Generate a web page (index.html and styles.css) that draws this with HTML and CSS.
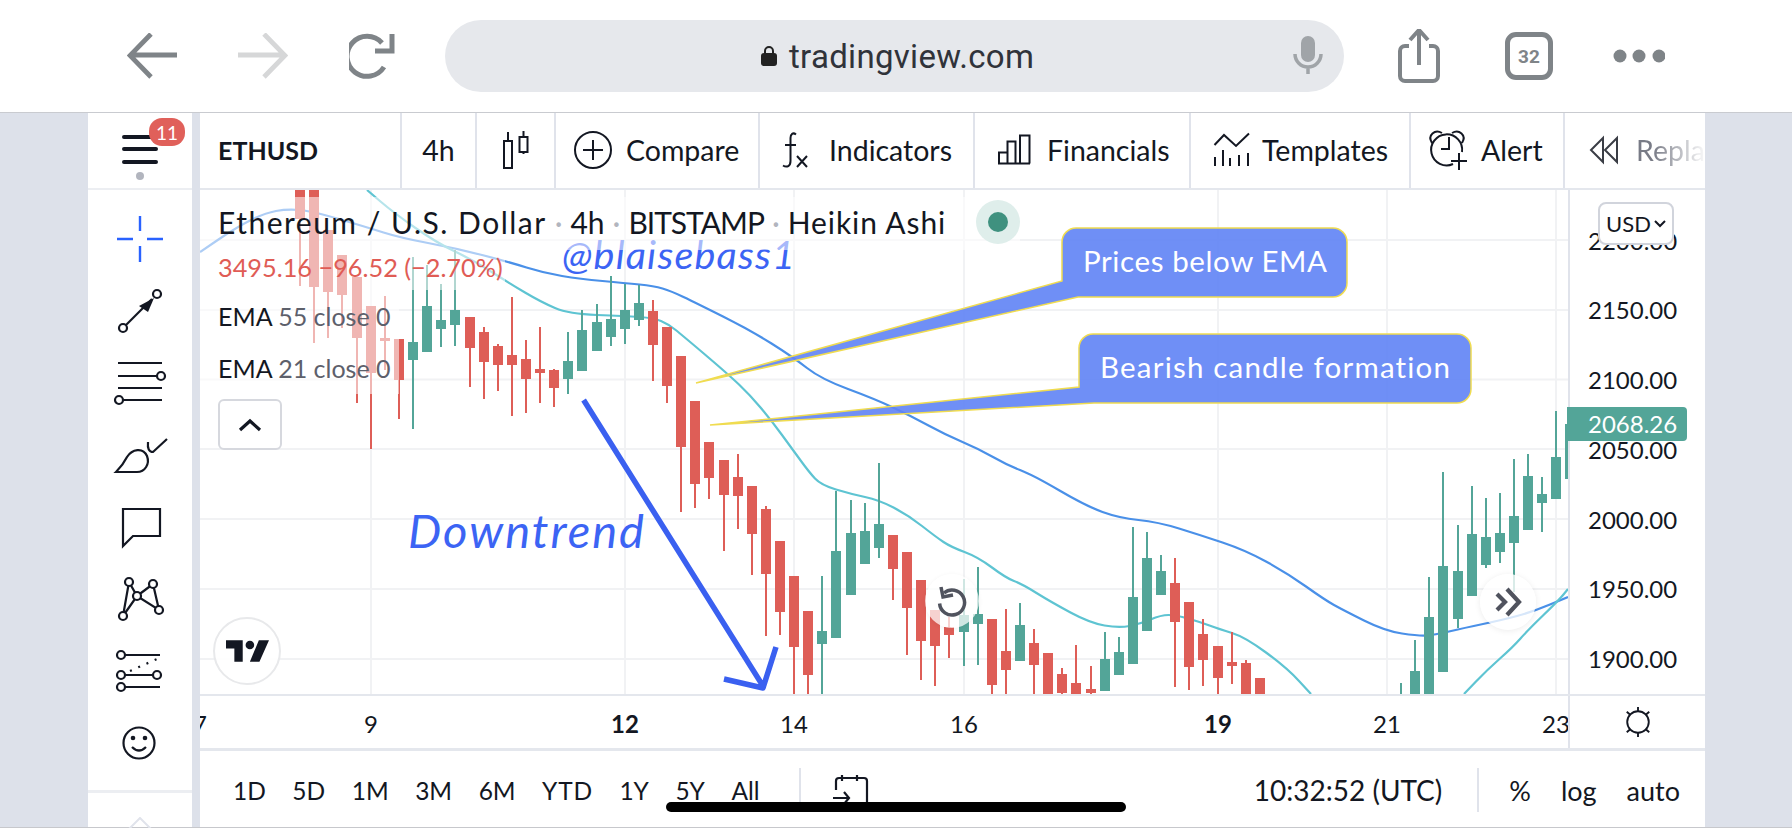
FILE: index.html
```html
<!DOCTYPE html>
<html lang="en">
<head>
<meta charset="utf-8">
<title>ETHUSD – TradingView</title>
<link rel="stylesheet" href="styles.css">
</head>
<body>
<header class="browser">
  <svg class="b-icon b-nav" viewBox="0 0 50 46"><path d="M50 22H6M24 1L3 22.500L24 44" fill="none" stroke="#7f8488" stroke-width="4.800"/></svg>
  <svg class="b-icon b-nav" viewBox="0 0 50 46"><path d="M0 22H44M26 1L47 22.500L26 44" fill="none" stroke="#d6d7d8" stroke-width="4.800"/></svg>
  <svg class="b-icon b-reload" viewBox="0 0 46 46"><path d="M33 10A20 20 0 1 0 35 34" fill="none" stroke="#7f8488" stroke-width="5"/><path d="M26 18H43V1" fill="none" stroke="#7f8488" stroke-width="5"/></svg>
  <div class="address">
    <svg class="lock" viewBox="0 0 16 20"><path d="M4 8V5a4 4 0 0 1 8 0v3" fill="none" stroke="#222" stroke-width="2"/><rect y="7" width="16" height="13" rx="3" fill="#222"/></svg>
    <span class="url">tradingview.com</span>
    <svg class="mic" viewBox="0 0 30 38"><rect x="8" width="14" height="26" rx="7" fill="#a0a4a8"/><path d="M2 18a13 13 0 0 0 26 0M15 31V38" fill="none" stroke="#a0a4a8" stroke-width="3.500"/></svg>
  </div>
  <svg class="b-icon b-share" viewBox="0 0 42 54"><path d="M11 17H7a5 5 0 0 0-5 5v25a5 5 0 0 0 5 5h28a5 5 0 0 0 5-5V22a5 5 0 0 0-5-5h-4" fill="none" stroke="#7f8488" stroke-width="4"/><path d="M21 3V36M12 11L21 1L30 11" fill="none" stroke="#7f8488" stroke-width="4"/></svg>
  <div class="tabs">32</div>
  <svg class="b-icon b-more" viewBox="0 0 52 14"><circle cx="7" cy="7" r="6.500" fill="#7f8488"/><circle cx="26" cy="7" r="6.500" fill="#7f8488"/><circle cx="46" cy="7" r="6.500" fill="#7f8488"/></svg>
</header>

<div class="page">
  <div class="app">
    <aside class="sidebar">
      <div class="menu-cell">
        <svg class="menu-icon" viewBox="0 0 36 56"><path d="M2 14H34M2 26H34M2 39H34" stroke="#131722" stroke-width="4" stroke-linecap="round"/><circle cx="18" cy="53" r="4" fill="#b2b5be"/></svg>
        <span class="badge">11</span>
      </div>
      <div class="tools">
        <svg class="tool" viewBox="0 0 52 52"><path d="M3 26H19M33 26H49M26 3V18M26 33V49" fill="none" stroke="#2962ff" stroke-width="2.400"/></svg>
        <svg class="tool" viewBox="0 0 52 52"><path d="M12 40L38 14" class="ts"/><path d="M25 21L40 13L34 27Z" fill="#131722"/><circle cx="43" cy="9" r="4" class="tc"/><circle cx="9" cy="43" r="4" class="tc"/></svg>
        <svg class="tool" viewBox="0 0 52 52"><path d="M4 6H48M4 19H43M4 31H48M9 43H48" class="ts"/><circle cx="47" cy="19" r="4" class="tc"/><circle cx="5" cy="43" r="4" class="tc"/></svg>
        <svg class="tool" viewBox="0 0 52 52"><path d="M2 43H23C31 43 36 35 33 27C29 18 18 20 13 28C10 34 7 38 2 43Z" class="ts"/><path d="M34 13Q33 23 39 23L53 10" class="ts"/></svg>
        <svg class="tool" viewBox="0 0 52 52"><path d="M9 8H46V35H19L9 45Z" class="ts"/></svg>
        <svg class="tool" viewBox="0 0 52 52"><path d="M9 43L15 9L23 23L39 11L45 37L23 23L9 43" class="ts"/><circle cx="15" cy="9" r="4" class="tc"/><circle cx="39" cy="11" r="4" class="tc"/><circle cx="23" cy="23" r="4" class="tc"/><circle cx="45" cy="37" r="4" class="tc"/><circle cx="9" cy="43" r="4" class="tc"/></svg>
        <svg class="tool" viewBox="0 0 52 52"><path d="M11 10H46M11 30H39M11 42H46" class="ts"/><path d="M16 26L43 14" class="ts" stroke-dasharray="2 7"/><circle cx="7" cy="10" r="4" class="tc"/><circle cx="7" cy="30" r="4" class="tc"/><circle cx="43" cy="30" r="4" class="tc"/><circle cx="7" cy="42" r="4" class="tc"/></svg>
        <svg class="tool" viewBox="0 0 52 52"><circle cx="25" cy="26" r="15.500" class="ts"/><circle cx="19" cy="21" r="2.300" fill="#131722"/><circle cx="31" cy="21" r="2.300" fill="#131722"/><path d="M18 30Q25 37 32 30" class="ts"/></svg>
      </div>
      <div class="side-foot"><svg class="side-chevron" viewBox="0 0 24 12"><path d="M1 12L12 1L23 12" fill="none" stroke="#e0e3eb" stroke-width="2"/></svg></div>
    </aside>

    <main class="workspace">
      <nav class="toolbar">
        <div class="tb tb-symbol">ETHUSD</div>
        <div class="tb tb-interval">4h</div>
        <div class="tb tb-style"><svg class="tb-svg i-candle" viewBox="0 0 26 38"><path d="M5 1V10M5 36V38" fill="none" stroke="#131722" stroke-width="2"/><rect x="1" y="10" width="8" height="27" class="tb-s"/><path d="M20.500 0V6M20.500 21V23" fill="none" stroke="#131722" stroke-width="2"/><rect x="16.500" y="6" width="8" height="15" class="tb-s"/></svg></div>
        <div class="tb tb-compare"><svg class="tb-svg i-compare" viewBox="0 0 38 38"><circle cx="19" cy="19" r="18" class="tb-s"/><path d="M19 9V29M9 19H29" class="tb-s"/></svg><span>Compare</span></div>
        <div class="tb tb-indicators"><svg class="tb-svg i-fx" viewBox="0 0 28 36"><path d="M14 2.500C11 0 8.500 2 8.500 6V29C8.500 34 5 36 1 33.500M3 13H14M15 24L25 35M25 24L15 35" class="tb-s"/></svg><span>Indicators</span></div>
        <div class="tb tb-financials"><svg class="tb-svg i-fin" viewBox="0 0 34 31"><path d="M1 29.500H33M2 29.500V18.500H10.500V29.500M10.500 29.500V7.500H18.500V29.500M23 29.500V1.500H32.500V29.500" class="tb-s"/></svg><span>Financials</span></div>
        <div class="tb tb-templates"><svg class="tb-svg i-tpl" viewBox="0 0 36 34"><path d="M0.500 12L10 2L22 13L35 0.500" class="tb-s"/><path d="M1 24V33M9 17V33M16 25V33M25 22V33M34 20V33" class="tb-s"/></svg><span>Templates</span></div>
        <div class="tb tb-alert"><svg class="tb-svg i-alert" viewBox="0 0 40 40"><path d="M24 34A15.500 15.500 0 1 1 33 22M3 13C-2 5 6 -1 13 3M33 13C38 5 30 -1 23 3M20 7V19H12M30 23V40M22 31H38" class="tb-s"/></svg><span>Alert</span></div>
        <div class="tb tb-replay"><svg class="tb-svg i-replay" viewBox="0 0 30 26"><path d="M14 1L2 13L14 25ZM28 1L16 13L28 25Z" class="tb-r"/></svg><span class="replay-label">Replay</span></div>
      </nav>

      <section class="chart-row">
        <div class="pane">
          <svg class="chart" viewBox="200 190 1368 504" preserveAspectRatio="none">
            <path class="grid" d="M200 240H1568M200 310H1568M200 379.500H1568M200 449H1568M200 519H1568M200 589H1568M200 659H1568M371 190V694M625 190V694M794 190V694M964 190V694M1218 190V694M1387 190V694M1556 190V694"/>
            <path class="ema-slow" d="M200 252L218.500 239.500Q237 227 251 220Q265 213 276 211Q287 209 299.500 210Q312 211 339 219Q366 227 383.500 232.500Q401 238 428 243Q455 248 482 255Q509 262 526.500 267.500Q544 273 562 276Q580 279 602.500 281Q625 283 639.500 284.500Q654 286 662.500 288.500Q671 291 683.500 297Q696 303 723 316.500Q750 330 771.500 343.500Q793 357 807 368Q821 379 848 389Q875 399 893 407.500Q911 416 928.500 425.500Q946 435 962.500 442Q979 449 993 457Q1007 465 1020 470Q1033 475 1059.500 490.500Q1086 506 1102.500 512Q1119 518 1138.500 520Q1158 522 1179 528.500Q1200 535 1222.500 542.500Q1245 550 1266 561.500Q1287 573 1306 586.500Q1325 600 1334 605Q1343 610 1364 620.500Q1385 631 1402 633.500Q1419 636 1426.500 635.500Q1434 635 1449 631.500Q1464 628 1483 624Q1502 620 1517 616Q1532 612 1550 604.500L1568 597"/>
            <path class="ema-fast" d="M367 190L380.500 201.500Q394 213 415.500 228Q437 243 455 251.500Q473 260 491 271.500Q509 283 525 292.500Q541 302 555 308Q569 314 597 315Q625 316 639.500 317Q654 318 661 321Q668 324 675 329.500Q682 335 705.500 355Q729 375 739.500 385Q750 395 760.500 407.500Q771 420 782 435Q793 450 801 461Q809 472 815 478.500Q821 485 836 489.500Q851 494 865 497Q879 500 893.500 507.500Q908 515 922 526Q936 537 943.500 542Q951 547 964.500 552Q978 557 992 567.500Q1006 578 1014 581Q1022 584 1036.500 593Q1051 602 1070.500 612.500Q1090 623 1104.500 625.500Q1119 628 1129.500 626Q1140 624 1150.500 619.500Q1161 615 1168.500 615Q1176 615 1188 618.500Q1200 622 1209.500 625.500Q1219 629 1232 633Q1245 637 1266 652.500Q1287 668 1299 681L1311 694"/>
            <path class="ema-fast" d="M1464 694L1475.500 682Q1487 670 1500 658.500Q1513 647 1520.500 638.500Q1528 630 1543.500 615Q1559 600 1563.500 594.500L1568 589"/>
            <path class="wick down" d="M300 190V286M314 190V343M328 230V338M342 255V328M357 277V403M371 306V449M385 296V370M399 339V419M470 317V387M484 327V399M498 344V391M512 297V416M526 340V413M540 327V403M554 369V407M653 300V381M667 327V403M681 356V512M695 401V508M709 442V499M724 460V551M738 454V529M752 486V575M766 506V636M780 541V635M794 576V694M808 611V694M893 535V600M907 552V655M921 580V680M935 610V686M949 617V658M992 619V694M1006 609V694M1034 629V694M1062 668V694M1076 645V694M1091 666V694M1175 558V687M1189 602V690M1203 619V686M1218 646V694M1232 632V684M1246 660V694"/>
            <path class="body down" d="M300 190V219M314 190V287M328 230V292M342 255V295M357 277V338M371 306V373M385 338V341M399 339V380M470 317V348M484 332V362M498 346V365M512 355V365M526 359V379M540 369V373M554 370V388M653 311V345M667 327V386M681 356V447M695 401V484M709 442V478M724 460V495M738 477V496M752 486V534M766 509V574M780 541V612M794 576V647M808 611V675M893 535V569M907 552V608M921 580V641M935 610V646M949 627V635M992 619V685M1006 651V670M1034 643V665M1048 653V694M1062 674V693M1076 683V694M1091 689V693M1175 583V622M1189 602V667M1203 634V660M1218 646V678M1232 662V666M1246 663V694M1260 678V694"/>
            <path class="wick up" d="M413 257V429M427 265V352M441 284V347M455 250V346M568 332V394M582 310V371M597 304V351M611 276V346M625 284V344M639 285V326M822 576V694M836 491V638M851 500V595M865 503V564M879 463V558M964 579V666M978 567V665M1020 603V661M1105 632V691M1119 637V675M1133 527V664M1147 532V631M1161 555V595M1401 683V694M1415 640V694M1429 577V694M1443 472V672M1458 525V628M1472 486V596M1486 498V568M1500 493V563M1514 459V592M1528 454V530M1542 477V532M1556 411V499"/>
            <path class="body up" d="M413 342V360M427 306V352M441 320V329M455 310V325M568 361V379M582 330V371M597 322V351M611 319V337M625 310V329M639 303V320M822 631V644M836 551V638M851 533V595M865 531V564M879 524V548M964 615V632M978 614V624M1020 625V661M1105 659V691M1119 652V675M1133 597V664M1147 558V631M1161 571V595M1415 671V694M1429 617V694M1443 566V672M1458 571V619M1472 534V596M1486 537V565M1500 533V552M1514 516V543M1528 476V530M1542 494V503M1556 457V499M1570 424V479"/>
            <text class="draw-sign" x="562" y="269">@blaisebass1</text>
            <text class="draw-trend" x="408" y="548">Downtrend</text>
            <path class="draw-arrow" d="M583.600 400L763 686M724 679L763 688L776 647"/>
            <path class="callout" d="M1076 228H1333a14 14 0 0 1 14 14V283a14 14 0 0 1-14 14H1078L696 383L1062 281V242a14 14 0 0 1 14-14Z"/>
            <path class="callout" d="M1093 334H1457a14 14 0 0 1 14 14V389a14 14 0 0 1-14 14H1094L710 425L1079 387V348a14 14 0 0 1 14-14Z"/>
            <text class="callout-text" x="1083" y="272">Prices below EMA</text>
            <text class="callout-text wide" x="1100" y="378">Bearish candle formation</text>
          </svg>

          <div class="legend">
            <div class="leg-row leg-title"><span class="t-name">Ethereum / U.S. Dollar</span><i class="sep">·</i><span>4h</span><i class="sep">·</i><span class="t-exch">BITSTAMP</span><i class="sep">·</i><span class="t-style">Heikin Ashi</span><span class="status"></span></div>
            <div class="leg-row leg-price">3495.16 −96.52 (−2.70%)</div>
            <div class="leg-row leg-ema"><b>EMA</b> 55 close 0</div>
            <div class="leg-row leg-ema"><b>EMA</b> 21 close 0</div>
            <div class="collapse"><svg class="collapse-icon" viewBox="0 0 24 14"><path d="M2 12L12 3L22 12" fill="none" stroke="#131722" stroke-width="3.200"/></svg></div>
          </div>

          <div class="round logo-btn"><svg class="tv-logo" viewBox="0 0 36 18"><path d="M14 18H7V7H0V0H14ZM28 18H20L27.500 0H36Z" fill="#131722"/><circle cx="20" cy="4" r="3.600" fill="#131722"/></svg></div>
          <div class="round reset-btn"><svg class="round-icon" viewBox="0 0 32 32"><path d="M8 8A12.500 12.500 0 1 1 3.600 18.500" fill="none" stroke="#50535e" stroke-width="3.500"/><path d="M5 2L7 12L17 10" fill="none" stroke="#50535e" stroke-width="3.500"/></svg></div>
          <div class="round fwd-btn"><svg class="round-icon" viewBox="0 0 32 32"><path d="M5 8L13 16L5 24M15 3L27 16L15 29" fill="none" stroke="#50535e" stroke-width="4.200"/></svg></div>
        </div>

        <div class="price-axis">
          <span class="price">2200.00</span>
          <span class="price">2150.00</span>
          <span class="price">2100.00</span>
          <span class="price">2050.00</span>
          <span class="price">2000.00</span>
          <span class="price">1950.00</span>
          <span class="price">1900.00</span>
          <div class="currency">USD<svg class="cur-chevron" viewBox="0 0 12 8"><path d="M1 1L6 6L11 1" fill="none" stroke="#131722" stroke-width="2"/></svg></div>
          <div class="last-price">2068.26</div>
        </div>
      </section>

      <div class="time-row">
        <div class="time-axis">
          <span class="tick" style="left:0px">7</span>
          <span class="tick" style="left:171px">9</span>
          <span class="tick bold" style="left:425px">12</span>
          <span class="tick" style="left:594px">14</span>
          <span class="tick" style="left:764px">16</span>
          <span class="tick bold" style="left:1018px">19</span>
          <span class="tick" style="left:1187px">21</span>
          <span class="tick" style="left:1356px">23</span>
        </div>
        <div class="time-corner"><svg class="sun" viewBox="0 0 32 32"><circle cx="16" cy="16" r="11.500" fill="none" stroke="#131722" stroke-width="2"/><path d="M16 0V5M16 27V32M4 5L8 8.500M28 5L24 8.500M4 27L8 23.500M28 27L24 23.500" stroke="#131722" stroke-width="2"/></svg></div>
      </div>

      <div class="range-bar">
        <div class="ranges"><span>1D</span><span>5D</span><span>1M</span><span>3M</span><span>6M</span><span class="ytd">YTD</span><span>1Y</span><span>5Y</span><span>All</span></div>
        <i class="range-sep"></i>
        <svg class="cal" viewBox="0 0 36 32"><path d="M3 16V7a3 3 0 0 1 3-3H31a3 3 0 0 1 3 3V30M9 1V7M24 1V7M0 24H15M11 18L16 24L11 30" fill="none" stroke="#131722" stroke-width="2.200"/></svg>
        <span class="clock">10:32:52 (UTC)</span>
        <i class="range-sep clock-sep"></i>
        <div class="modes"><span>%</span><span>log</span><span>auto</span></div>
      </div>
    </main>
  </div>
</div>
<div class="home-indicator"></div>
</body>
</html>
```
FILE: styles.css
```css
* { box-sizing: border-box; }
html, body { margin: 0; height: 828px; overflow: hidden; }
body { position: relative; background: #fff; font-family: Lato, "Noto Sans", sans-serif; color: #131722; }

.browser { height: 113px; display: flex; align-items: center; padding-left: 127px; border-bottom: 1px solid #c9cbd0; }
.b-icon { display: block; flex: none; }
.b-nav { width: 50px; height: 46px; margin-right: 61px; }
.b-reload { width: 46px; height: 46px; margin-right: 50px; }
.address { width: 899px; height: 72px; border-radius: 36px; background: #e6e8ec; display: flex; align-items: center; padding-left: 316px; position: relative; margin-right: 54px; }
.lock { width: 16px; height: 20px; margin-right: 12px; flex: none; }
.url { font: 400 33px Roboto, sans-serif; color: #30333a; letter-spacing: .3px; }
.mic { position: absolute; left: 848px; top: 16px; width: 30px; height: 38px; }
.b-share { width: 42px; height: 54px; margin-right: 65px; margin-top: -1px; }
.tabs { width: 48px; height: 48px; flex: none; border: 5px solid #7f8488; border-radius: 11px; display: flex; align-items: center; justify-content: center; font: 700 19px Roboto, sans-serif; color: #7f8488; margin-right: 60px; }
.b-more { width: 52px; height: 14px; }

.page { height: 715px; background: #dde1ea; padding: 0 87px 0 88px; border-bottom: 1px solid #c7c8cc; }
.app { height: 714px; background: #fff; display: flex; }

.sidebar { width: 112px; flex: none; border-right: 8px solid #dde1ea; display: flex; flex-direction: column; }
.menu-cell { height: 77px; flex: none; position: relative; border-bottom: 2px solid #eceef2; display: flex; justify-content: center; }
.menu-icon { width: 36px; height: 56px; margin-top: 10px; overflow: visible; margin-left: 0; }
.badge { position: absolute; left: 61px; top: 5px; width: 36px; height: 28px; border-radius: 13px; background: #e0605a; color: #fff; font-size: 19px; display: flex; align-items: center; justify-content: center; }
.tools { display: flex; flex-direction: column; align-items: center; padding-top: 13px; }
.tool { width: 52px; height: 52px; margin: 10px 0; overflow: visible; display: block; }
.ts { fill: none; stroke: #131722; stroke-width: 2.200; }
.tc { fill: #fff; stroke: #131722; stroke-width: 2.200; }
.side-foot { margin-top: auto; height: 37px; border-top: 3px solid #eceef2; display: flex; justify-content: center; align-items: flex-end; }
.side-chevron { width: 24px; height: 12px; display: block; margin-bottom: -2px; }

.workspace { flex: 1; min-width: 0; display: flex; flex-direction: column; }
.toolbar { height: 77px; flex: none; display: flex; border-bottom: 2px solid #e4e7ed; overflow: hidden; }
.tb { display: flex; align-items: center; font-size: 28.500px; padding-bottom: 2px; border-right: 2px solid #e0e3eb; flex: none; white-space: nowrap; }
.tb-symbol { width: 202px; padding-left: 18px; font-weight: 700; font-size: 25px; }
.tb-interval { width: 75px; justify-content: center; }
.tb-style { width: 79px; justify-content: center; }
.tb-compare { width: 204px; padding-left: 18px; gap: 14px; }
.tb-indicators { width: 215px; padding-left: 22px; gap: 19px; }
.tb-financials { width: 216px; padding-left: 22px; gap: 16px; }
.tb-templates { width: 220px; padding-left: 23px; gap: 12px; }
.tb-alert { width: 154px; padding-left: 18px; gap: 12px; }
.tb-replay { flex: 1; border-right: 0; padding-left: 24px; gap: 17px; }
.tb-svg { display: block; flex: none; overflow: visible; }
.tb-s { fill: none; stroke: #131722; stroke-width: 2; }
.tb-r { fill: none; stroke: #3a3d45; stroke-width: 2; }
.i-candle { width: 26px; height: 38px; }
.i-compare { width: 38px; height: 38px; }
.i-fx { width: 28px; height: 36px; }
.i-fin { width: 34px; height: 31px; }
.i-tpl { width: 36px; height: 34px; }
.i-alert { width: 40px; height: 40px; }
.i-replay { width: 30px; height: 26px; }
.replay-label { background: linear-gradient(90deg, #787b86 20%, #fff 86%); -webkit-background-clip: text; background-clip: text; color: transparent; }

.chart-row { height: 506px; flex: none; display: flex; border-bottom: 2px solid #e4e7ed; }
.pane { flex: 1; min-width: 0; position: relative; overflow: hidden; }
.chart { position: absolute; left: 0; top: 0; width: 1368px; height: 504px; display: block; }
.grid { stroke: #f1f2f4; stroke-width: 2; fill: none; }
.ema-slow { fill: none; stroke: #4a90e8; stroke-width: 2.200; stroke-linejoin: round; }
.ema-fast { fill: none; stroke: #5ec4d2; stroke-width: 2.200; stroke-linejoin: round; }
.wick { fill: none; stroke-width: 2; }
.body { fill: none; stroke-width: 10; }
.down { stroke: #de5e57; }
.up { stroke: #53a598; }
.draw-sign { font-family: Lato, sans-serif; font-style: italic; font-size: 39.500px; fill: #3c64f4; letter-spacing: 1.200px; }
.draw-trend { font-family: Lato, sans-serif; font-style: italic; font-size: 47px; fill: #3c64f4; letter-spacing: 2px; }
.draw-arrow { fill: none; stroke: #3a60f0; stroke-width: 5.500; stroke-linejoin: round; }
.callout { fill: #5f83f5; fill-opacity: .9; stroke: #f0dc50; stroke-width: 1.500; }
.callout-text { font-family: Lato, sans-serif; font-size: 29.500px; fill: #fff; letter-spacing: .6px; }
.callout-text.wide { letter-spacing: 1.200px; }

.legend { position: absolute; left: 0; top: 7px; display: flex; flex-direction: column; align-items: flex-start; }
.leg-row { padding-left: 18px; background: rgba(255, 255, 255, .55); display: flex; align-items: center; white-space: pre; }
.leg-title { height: 53px; font-size: 30px; padding-bottom: 3px; }
.t-name { letter-spacing: 1.500px; }
.t-exch { letter-spacing: -1px; }
.t-style { letter-spacing: .9px; }
.sep { font-style: normal; color: #b2b5be; margin: 0 8px; }
.status { width: 44px; height: 44px; margin-left: 30px; border-radius: 50%; background: #dfeeeb; display: flex; align-items: center; justify-content: center; position: relative; top: 0; }
.status::after { content: ""; width: 20px; height: 20px; border-radius: 50%; background: #3f917f; }
.leg-price { height: 40px; font-size: 25.300px; color: #e05c55; padding-right: 2px; padding-bottom: 6px; }
.leg-ema { height: 52px; width: 199px; font-size: 25px; color: #5d606b; display: block; line-height: 52px; }
.leg-ema b { font-weight: 400; color: #131722; }
.collapse { width: 64px; height: 51px; margin: 5px 0 0 18px; border: 2px solid #d6d8de; border-radius: 6px; background: #fff; display: flex; align-items: center; justify-content: center; }
.collapse-icon { width: 24px; height: 14px; display: block; }

.round { position: absolute; border-radius: 50%; display: flex; align-items: center; justify-content: center; }
.logo-btn { left: 13px; top: 427px; width: 68px; height: 68px; border: 2px solid #e8e9eb; background: rgba(255, 255, 255, .9); }
.tv-logo { width: 43px; height: 22px; display: block; }
.reset-btn { left: 725px; top: 384px; width: 54px; height: 54px; background: rgba(255, 255, 255, .72); box-shadow: 0 1px 5px rgba(0, 0, 0, .06); }
.fwd-btn { left: 1280px; top: 384px; width: 56px; height: 56px; background: rgba(255, 255, 255, .78); box-shadow: 0 1px 6px rgba(0, 0, 0, .08); }
.round-icon { width: 32px; height: 32px; display: block; }

.price-axis { width: 137px; flex: none; position: relative; border-left: 2px solid #e0e3eb; padding-top: 15.500px; display: flex; flex-direction: column; }
.price { height: 69.800px; line-height: 69.800px; padding-left: 18px; font-size: 24px; flex: none; }
.currency { position: absolute; left: 28px; top: 12px; width: 76px; height: 43px; background: #fff; border: 2px solid #d1d4dc; border-radius: 8px; display: flex; align-items: center; justify-content: center; gap: 3px; font-size: 22px; }
.cur-chevron { width: 12px; height: 8px; display: block; }
.last-price { position: absolute; left: -3px; top: 217px; width: 120px; height: 34px; background: #53a598; color: #fff; border-radius: 0 4px 4px 0; padding-left: 21px; font-size: 24px; line-height: 34px; }

.time-row { height: 55px; flex: none; display: flex; border-bottom: 3px solid #e4e7ed; }
.time-axis { flex: 1; position: relative; overflow: hidden; }
.tick { position: absolute; top: 0; line-height: 55px; font-size: 24px; transform: translateX(-50%); }
.bold { font-weight: 700; }
.time-corner { width: 137px; flex: none; border-left: 2px solid #e0e3eb; display: flex; align-items: center; justify-content: center; }
.sun { width: 30px; height: 30px; display: block; }

.range-bar { flex: 1; display: flex; align-items: center; font-size: 24.500px; padding: 2px 25px 0 33px; }
.ranges { display: flex; gap: 26.500px; }
.ytd { letter-spacing: .8px; }
.range-sep { width: 2px; height: 44px; background: #e0e3eb; margin-left: 39px; flex: none; }
.cal { width: 36px; height: 32px; margin-left: 32px; display: block; }
.clock { margin-left: auto; font-size: 28px; }
.clock-sep { margin-left: 35px; }
.modes { display: flex; gap: 30px; margin-left: 30px; font-size: 27px; }

.home-indicator { position: absolute; left: 666px; top: 802px; width: 460px; height: 10px; border-radius: 5px; background: #000; }
```
